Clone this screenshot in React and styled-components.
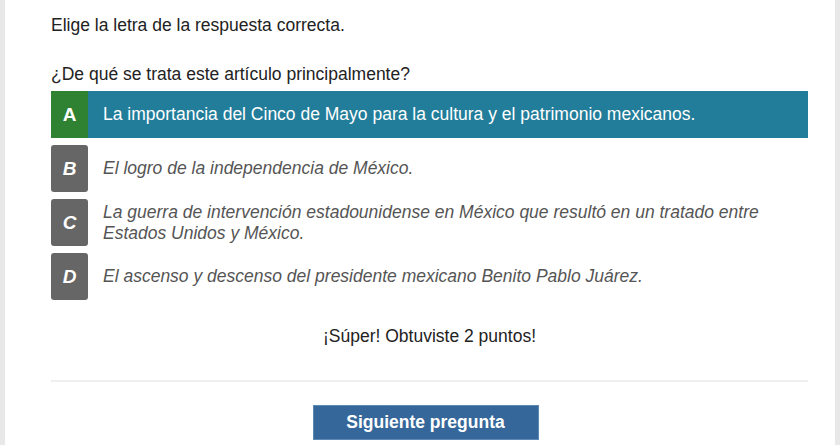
import React from "react";
import styled, { createGlobalStyle } from "styled-components";

const GlobalStyle = createGlobalStyle`
  body {
    margin: 0;
    background: #e8e8e8;
    font-family: "Liberation Sans", Arial, sans-serif;
  }
`;

const Page = styled.div`
  background: #fff;
  margin: 0 5px;
  min-height: 445px;
  box-sizing: border-box;
  padding: 14px 27px 0 46px;
  color: #222;
  font-size: 17.5px;
`;

const Prompt = styled.p`
  margin: ${(p) => (p.$first ? "0" : "27px 0 0")};
  line-height: 22px;
`;

const Options = styled.div`
  display: flex;
  flex-direction: column;
  gap: 7px;
  margin-top: 6px;
`;

const Option = styled.div`
  display: flex;
  min-height: 47px;
  background: ${(p) => (p.$selected ? "#227d9a" : "transparent")};
  cursor: pointer;
`;

const Letter = styled.div`
  flex: none;
  width: 37px;
  display: flex;
  align-items: center;
  justify-content: center;
  background: ${(p) => (p.$selected ? "#2e8231" : "#666")};
  border-radius: ${(p) => (p.$selected ? "0" : "3px")};
  color: #fff;
  font-weight: bold;
  font-size: 19px;
  font-style: ${(p) => (p.$selected ? "normal" : "italic")};
`;

const OptionText = styled.div`
  display: flex;
  align-items: center;
  padding: 0 12px 0 15px;
  line-height: 21px;
  color: ${(p) => (p.$selected ? "#fff" : "#555")};
  font-style: ${(p) => (p.$selected ? "normal" : "italic")};
`;

const Score = styled.p`
  margin: 25px 0 0;
  text-align: center;
  line-height: 22px;
`;

const Rule = styled.hr`
  border: none;
  border-top: 2px solid #efefef;
  margin: 33px 0 0;
`;

const Footer = styled.div`
  display: flex;
  justify-content: center;
  padding-top: 23px;
  padding-right: 8px;
`;

const NextButton = styled.button`
  width: 226px;
  height: 35px;
  background: #35679a;
  border: 1px solid #5e89b4;
  color: #fff;
  font-family: inherit;
  font-weight: bold;
  font-size: 17.5px;
  cursor: pointer;
`;

const answers = [
  { letter: "A", text: "La importancia del Cinco de Mayo para la cultura y el patrimonio mexicanos.", selected: true },
  { letter: "B", text: "El logro de la independencia de México." },
  { letter: "C", text: "La guerra de intervención estadounidense en México que resultó en un tratado entre Estados Unidos y México." },
  { letter: "D", text: "El ascenso y descenso del presidente mexicano Benito Pablo Juárez." },
];

const App = () => {
  return (
    <>
      <GlobalStyle />
      <Page>
        <Prompt $first>Elige la letra de la respuesta correcta.</Prompt>
        <Prompt>¿De qué se trata este artículo principalmente?</Prompt>
        <Options>
          {answers.map((a) => (
            <Option key={a.letter} $selected={a.selected}>
              <Letter $selected={a.selected}>{a.letter}</Letter>
              <OptionText $selected={a.selected}>{a.text}</OptionText>
            </Option>
          ))}
        </Options>
        <Score>¡Súper! Obtuviste 2 puntos!</Score>
        <Rule />
        <Footer>
          <NextButton>Siguiente pregunta</NextButton>
        </Footer>
      </Page>
    </>
  );
};

export default App;
